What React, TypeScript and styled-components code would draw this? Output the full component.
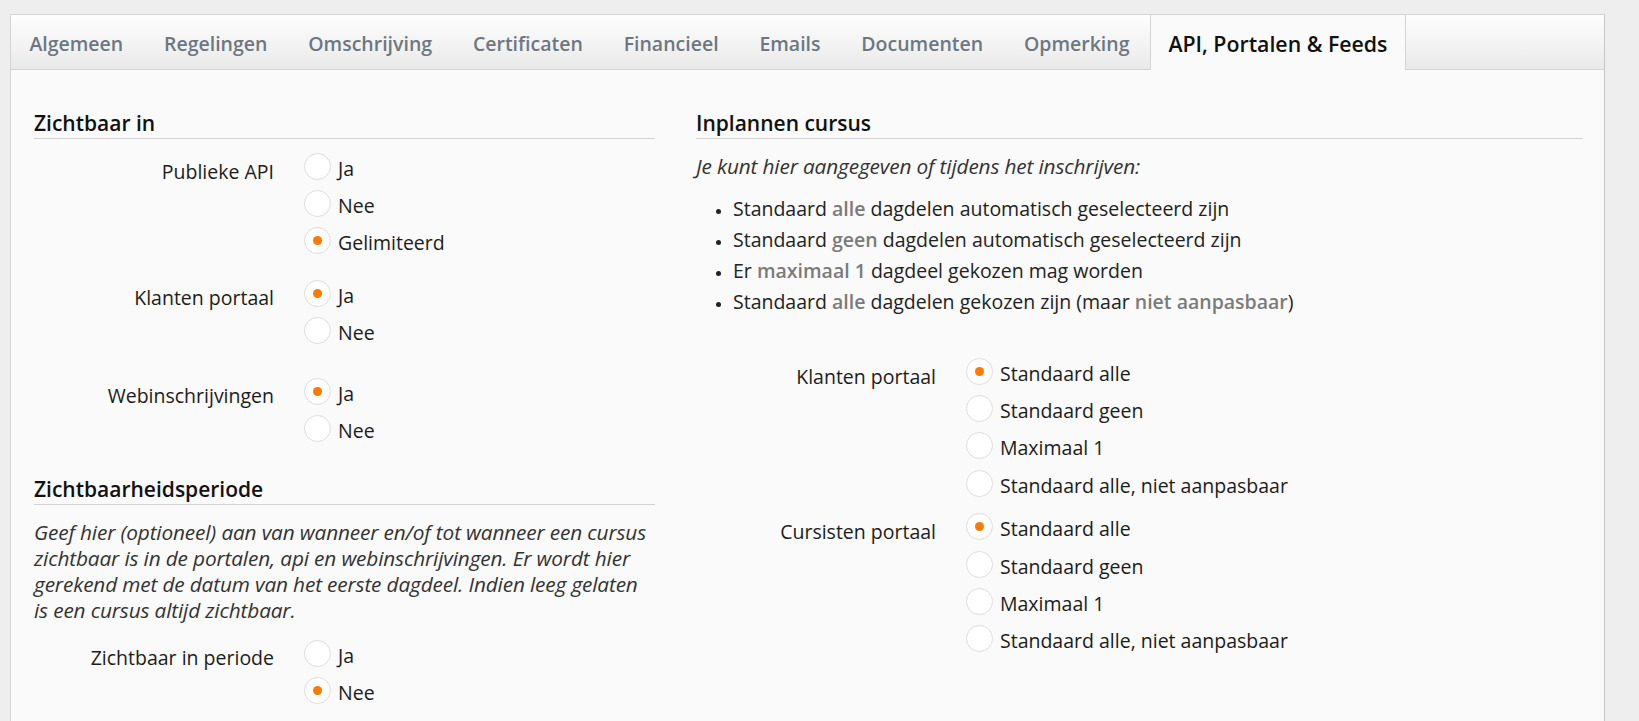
import React from 'react';
import styled, { createGlobalStyle, css } from 'styled-components';

const GlobalStyle = createGlobalStyle`
  html, body {
    margin: 0;
    padding: 0;
    background: #eeeeee;
    font-family: 'Open Sans', 'Noto Sans', sans-serif;
    color: #1c1c1c;
  }
  * {
    box-sizing: border-box;
  }
`;

const Page = styled.div`
  padding: 14px 34px 0 10px;
  height: 721px;
  overflow: hidden;
`;

const Panel = styled.div`
  background: #fafafa;
  border: 1px solid #d4d4d4;
  border-right-color: #c6c6c6;
  min-height: 740px;
`;

const TabBar = styled.div`
  display: flex;
  height: 55px;
  background: linear-gradient(to bottom, #fdfdfd 0%, #f3f3f3 55%, #e9e9e9 100%);
  border-bottom: 1px solid #d4d4d4;
`;

const Tab = styled.div<{ $active?: boolean }>`
  display: flex;
  align-items: center;
  padding: 2px 20.4px 0;
  font-size: 19.5px;
  font-weight: 600;
  color: #6e7781;
  white-space: nowrap;
  cursor: pointer;

  &:first-child {
    padding-left: 18.4px;
  }

  ${(p) =>
    p.$active &&
    css`
      background: #fafafa;
      color: #111;
      font-size: 21.3px;
      padding: 2px 17.5px 0;
      border-left: 1px solid #d4d4d4;
      border-right: 1px solid #d4d4d4;
      height: 55px;
      margin-bottom: -1px;
    `}
`;

const Content = styled.div`
  display: grid;
  grid-template-columns: 621px 887px;
  column-gap: 41px;
  padding: 38px 22px 30px 23px;
`;

const Column = styled.div`
  display: flex;
  flex-direction: column;
`;

const SectionTitle = styled.h3<{ $top?: number }>`
  margin: ${(p) => p.$top ?? 0}px 0 0;
  font-size: 21px;
  font-weight: 600;
  line-height: 30px;
  color: #111;
  border-bottom: 1px solid #d2d2d2;
`;

const Help = styled.p<{ $top?: number }>`
  margin: ${(p) => p.$top ?? 0}px 0 0;
  font-size: 20.8px;
  font-style: italic;
  line-height: 26px;
  letter-spacing: -0.15px;
  white-space: nowrap;
  color: #333;
`;

const BulletList = styled.ul`
  margin: 14px 0 0;
  padding-left: 37px;
  font-size: 19.5px;
  line-height: 31px;
  color: #222;

  li::marker {
    font-size: 15px;
  }
`;

const Em = styled.strong`
  font-weight: 600;
  color: #7b7b7b;
`;

const FormGroup = styled.div<{ $top: number }>`
  display: flex;
  margin-top: ${(p) => p.$top}px;
`;

const FieldLabel = styled.div`
  width: 240px;
  flex-shrink: 0;
  margin-right: 30px;
  padding-top: 2.5px;
  text-align: right;
  font-size: 19.5px;
  line-height: 37.2px;
  color: #1c1c1c;
`;

const Options = styled.div`
  display: flex;
  flex-direction: column;
`;

const Option = styled.label`
  display: flex;
  align-items: center;
  height: 37.2px;
  font-size: 19.5px;
  color: #1c1c1c;
  cursor: pointer;
`;

const RadioCircle = styled.span<{ $checked?: boolean }>`
  position: relative;
  width: 27px;
  height: 27px;
  margin-right: 7px;
  border: 1px solid #dddddd;
  border-radius: 50%;
  background: #fff;
  transform: translateY(-2px);
  flex-shrink: 0;

  ${(p) =>
    p.$checked &&
    css`
      &::after {
        content: '';
        position: absolute;
        left: 50%;
        top: 50%;
        width: 9px;
        height: 9px;
        margin: -4.5px 0 0 -4.5px;
        border-radius: 50%;
        background: #ff7a00;
      }
    `}
`;

interface RadioGroupProps {
  label: string;
  options: string[];
  selected: number;
  top: number;
}

function RadioGroup(props: RadioGroupProps) {
  const { label, options, selected, top } = props;

  return (
    <FormGroup $top={top}>
      <FieldLabel>{label}</FieldLabel>
      <Options>
        {options.map((opt, i) => (
          <Option key={opt}>
            <RadioCircle $checked={i === selected} />
            {opt}
          </Option>
        ))}
      </Options>
    </FormGroup>
  );
}

const tabs = [
  'Algemeen',
  'Regelingen',
  'Omschrijving',
  'Certificaten',
  'Financieel',
  'Emails',
  'Documenten',
  'Opmerking',
  'API, Portalen & Feeds',
];

const planOptions = [
  'Standaard alle',
  'Standaard geen',
  'Maximaal 1',
  'Standaard alle, niet aanpasbaar',
];

function App() {
  return (
    <>
      <GlobalStyle />
      <Page>
        <Panel>
          <TabBar>
            {tabs.map((t) => (
              <Tab key={t} $active={t === 'API, Portalen & Feeds'}>
                {t}
              </Tab>
            ))}
          </TabBar>

          <Content>
            <Column>
              <SectionTitle>Zichtbaar in</SectionTitle>
              <RadioGroup
                label="Publieke API"
                options={['Ja', 'Nee', 'Gelimiteerd']}
                selected={2}
                top={11}
              />
              <RadioGroup
                label="Klanten portaal"
                options={['Ja', 'Nee']}
                selected={0}
                top={15}
              />
              <RadioGroup
                label="Webinschrijvingen"
                options={['Ja', 'Nee']}
                selected={0}
                top={24}
              />

              <SectionTitle $top={24.5}>Zichtbaarheidsperiode</SectionTitle>
              <Help $top={14}>
                Geef hier (optioneel) aan van wanneer en/of tot wanneer een cursus
                <br />
                zichtbaar is in de portalen, api en webinschrijvingen. Er wordt hier
                <br />
                gerekend met de datum van het eerste dagdeel. Indien leeg gelaten
                <br />
                is een cursus altijd zichtbaar.
              </Help>
              <RadioGroup
                label="Zichtbaar in periode"
                options={['Ja', 'Nee']}
                selected={1}
                top={14}
              />
            </Column>

            <Column>
              <SectionTitle>Inplannen cursus</SectionTitle>
              <Help $top={14}>Je kunt hier aangegeven of tijdens het inschrijven:</Help>
              <BulletList>
                <li>
                  Standaard <Em>alle</Em> dagdelen automatisch geselecteerd zijn
                </li>
                <li>
                  Standaard <Em>geen</Em> dagdelen automatisch geselecteerd zijn
                </li>
                <li>
                  Er <Em>maximaal 1</Em> dagdeel gekozen mag worden
                </li>
                <li>
                  Standaard <Em>alle</Em> dagdelen gekozen zijn (maar{' '}
                  <Em>niet aanpasbaar</Em>)
                </li>
              </BulletList>
              <RadioGroup
                label="Klanten portaal"
                options={planOptions}
                selected={0}
                top={38}
              />
              <RadioGroup
                label="Cursisten portaal"
                options={planOptions}
                selected={0}
                top={6.5}
              />
            </Column>
          </Content>
        </Panel>
      </Page>
    </>
  );
}

export default App;
